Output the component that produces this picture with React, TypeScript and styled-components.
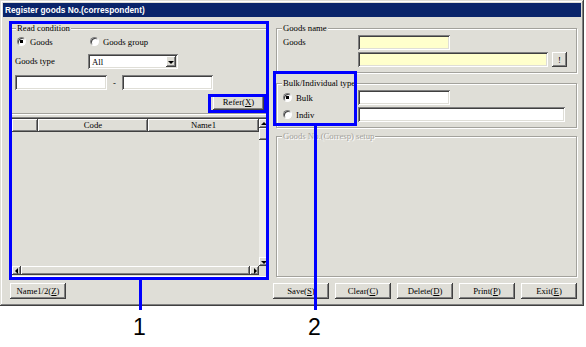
import styled, { createGlobalStyle } from 'styled-components';

const GlobalStyle = createGlobalStyle`
  html, body {
    margin: 0;
    padding: 0;
    background: #ffffff;
  }
  body {
    font-family: "Liberation Serif", serif;
  }
`;

const FACE = '#dfded7';

export default function App() {
  return (
    <Page>
      <GlobalStyle />
      <Window>
        <TitleBar>Register goods No.(correspondent)</TitleBar>
        <Body>
          <Column>
            <Group $pb={3}>
              <Legend>Read condition</Legend>
              <ReadGrid $mt={-1}>
                <RadioLabel>
                  <Radio $checked />
                  Goods
                </RadioLabel>
                <RadioLabel>
                  <Radio />
                  Goods group
                </RadioLabel>
              </ReadGrid>
              <ReadGrid $mt={5}>
                <Label>Goods type</Label>
                <Select>
                  <span>All</span>
                  <DropButton>
                    <Arrow $dir="down" />
                  </DropButton>
                </Select>
              </ReadGrid>
              <RangeRow>
                <Field $w={92} />
                <Dash>-</Dash>
                <Field $w={91} />
              </RangeRow>
              <ReferRow>
                <Button $w={51}>
                  Refer(<u>X</u>)
                </Button>
              </ReferRow>
            </Group>

            <Table>
              <TableMain>
                <HeaderRow>
                  <HeaderCell $w={26} />
                  <HeaderCell $w={110}>Code</HeaderCell>
                  <HeaderCell $w={111}>Name1</HeaderCell>
                </HeaderRow>
              </TableMain>
              <VScroll>
                <ScrollButton>
                  <Arrow $dir="up" />
                </ScrollButton>
                <Thumb $h={12} />
                <Track />
                <ScrollButton>
                  <Arrow $dir="down" />
                </ScrollButton>
              </VScroll>
              <HScroll>
                <ScrollButton>
                  <Arrow $dir="left" />
                </ScrollButton>
                <Thumb $grow />
                <ScrollButton>
                  <Arrow $dir="right" />
                </ScrollButton>
              </HScroll>
              <Corner />
            </Table>
          </Column>

          <Column>
            <Group>
              <Legend>Goods name</Legend>
              <FormGrid>
                <Label>Goods</Label>
                <Field $w={92} $bg="#ffffcc" />
                <span />
                <FieldRow>
                  <Field $w={190} $bg="#ffffcc" />
                  <SmallButton>!</SmallButton>
                </FieldRow>
              </FormGrid>
            </Group>

            <Group $mt={5}>
              <Legend>Bulk/Individual type</Legend>
              <FormGrid>
                <RadioLabel $pl={0}>
                  <Radio $checked />
                  Bulk
                </RadioLabel>
                <Field $w={92} />
                <RadioLabel $pl={0}>
                  <Radio />
                  Indiv
                </RadioLabel>
                <Field $w={207} />
              </FormGrid>
            </Group>

            <Group $mt={3} $grow>
              <Legend $disabled>Goods No.(Corresp) setup</Legend>
            </Group>
          </Column>
        </Body>

        <Footer>
          <Button $w={56}>
            Name1/2(<u>Z</u>)
          </Button>
          <ButtonGroup>
            <Button $w={56}>
              Save(<u>S</u>)
            </Button>
            <Button $w={56}>
              Clear(<u>C</u>)
            </Button>
            <Button $w={56}>
              Delete(<u>D</u>)
            </Button>
            <Button $w={56}>
              Print(<u>P</u>)
            </Button>
            <Button $w={56}>
              Exit(<u>E</u>)
            </Button>
          </ButtonGroup>
        </Footer>
      </Window>

      {/* annotation callouts drawn over the screenshot */}
      <Callout $x={9} $y={21} $w={260} $h={259} />
      <Callout $x={208} $y={94} $w={59} $h={19} />
      <Callout $x={273} $y={71} $w={84} $h={55} />
      <Leader $x={139} $y={280} $h={30} />
      <Leader $x={314} $y={126} $h={184} />
      <Marker $x={133}>1</Marker>
      <Marker $x={308}>2</Marker>
    </Page>
  );
}

const Page = styled.div`
  position: relative;
  width: 586px;
  height: 347px;
  overflow: hidden;
`;

const Window = styled.div`
  width: 584px;
  height: 306px;
  box-sizing: border-box;
  padding: 3px;
  background: ${FACE};
  box-shadow: inset -1px -1px #404040, inset 1px 1px ${FACE},
    inset -2px -2px #808080, inset 2px 2px #ffffff;
  display: flex;
  flex-direction: column;
`;

const TitleBar = styled.div`
  height: 14px;
  background: #0a246a;
  color: #ffffff;
  font-family: "Liberation Sans", Arial, sans-serif;
  font-weight: bold;
  font-size: 8.3px;
  line-height: 14px;
  padding-left: 2px;
  white-space: nowrap;
`;

const Body = styled.div`
  display: grid;
  grid-template-columns: 257px 301px;
  column-gap: 9px;
  height: 254px;
  padding: 6px 0 0 7px;
`;

const Column = styled.div`
  display: flex;
  flex-direction: column;
  min-height: 0;
`;

const Group = styled.fieldset<{ $mt?: number; $pb?: number; $grow?: boolean }>`
  margin: ${(p) => p.$mt ?? 0}px 0 0 0;
  padding: 1px 5px ${(p) => p.$pb ?? 5}px 6px;
  border: 1px solid #a3a29c;
  box-shadow: inset 1px 1px #ffffff, 1px 1px #ffffff;
  min-width: 0;
  ${(p) => (p.$grow ? 'flex: 1;' : '')}
`;

const Legend = styled.legend<{ $disabled?: boolean }>`
  padding: 0 1px;
  margin-left: -1px;
  background: ${FACE};
  font-size: 8.7px;
  line-height: 11px;
  color: ${(p) => (p.$disabled ? '#a3a29c' : '#000000')};
  ${(p) => (p.$disabled ? 'text-shadow: 1px 1px #ffffff;' : '')}
`;

const Label = styled.span`
  font-size: 8.7px;
  line-height: 15px;
  color: #000000;
  white-space: nowrap;
`;

const ReadGrid = styled.div<{ $mt?: number }>`
  display: grid;
  grid-template-columns: 73px auto;
  align-items: center;
  margin-top: ${(p) => p.$mt ?? 0}px;
  margin-left: -2px;
`;

const RadioLabel = styled.label<{ $pl?: number }>`
  display: flex;
  align-items: center;
  gap: 4px;
  padding-left: ${(p) => p.$pl ?? 2}px;
  height: 15px;
  font-size: 8.7px;
  white-space: nowrap;
`;

const Radio = styled.span<{ $checked?: boolean }>`
  width: 9px;
  height: 9px;
  box-sizing: border-box;
  border-radius: 50%;
  border: 1px solid;
  border-color: #808080 #ffffff #ffffff #808080;
  background: ${(p) =>
    p.$checked
      ? 'radial-gradient(circle, #000000 0 1.6px, #ffffff 2px)'
      : '#ffffff'};
  box-shadow: inset 1px 1px #404040;
  flex: none;
`;

const sunken = `
  box-sizing: border-box;
  box-shadow: inset 1px 1px #808080, inset -1px -1px #ffffff,
    inset 2px 2px #404040, inset -2px -2px ${FACE};
`;

const raised = `
  box-sizing: border-box;
  background: ${FACE};
  box-shadow: inset -1px -1px #404040, inset 1px 1px #ffffff,
    inset -2px -2px #808080;
`;

const Field = styled.div<{ $w: number; $bg?: string }>`
  ${sunken}
  width: ${(p) => p.$w}px;
  height: 15px;
  background: ${(p) => p.$bg ?? '#ffffff'};
`;

const Select = styled.div`
  ${sunken}
  width: 90px;
  height: 15px;
  background: #ffffff;
  display: flex;
  align-items: center;
  justify-content: space-between;
  padding: 2px 2px 2px 4px;
  font-size: 8.7px;
`;

const DropButton = styled.div`
  ${raised}
  width: 10px;
  height: 11px;
  display: flex;
  align-items: center;
  justify-content: center;
`;

const Arrow = styled.span<{ $dir: 'up' | 'down' | 'left' | 'right' }>`
  width: 0;
  height: 0;
  border: 3px solid transparent;
  ${(p) =>
    p.$dir === 'down'
      ? 'border-top: 3px solid #000; border-bottom: 0; margin-top: 1px;'
      : p.$dir === 'up'
      ? 'border-bottom: 3px solid #000; border-top: 0;'
      : p.$dir === 'left'
      ? 'border-right: 3px solid #000; border-left: 0;'
      : 'border-left: 3px solid #000; border-right: 0; margin-left: 1px;'}
`;

const RangeRow = styled.div`
  display: flex;
  align-items: center;
  margin: 6px 0 0 -2px;
`;

const Dash = styled.span`
  width: 15px;
  text-align: center;
  font-size: 8.7px;
`;

const ReferRow = styled.div`
  display: flex;
  justify-content: flex-end;
  margin: 4px -3px 0 0;
`;

const Button = styled.div<{ $w: number }>`
  ${raised}
  width: ${(p) => p.$w}px;
  height: 16px;
  display: flex;
  align-items: center;
  justify-content: center;
  font-size: 8.7px;
  white-space: nowrap;
  u {
    text-decoration-thickness: 1px;
  }
`;

const SmallButton = styled.div`
  ${raised}
  width: 15px;
  height: 15px;
  display: flex;
  align-items: center;
  justify-content: center;
  font-size: 8.7px;
`;

const FormGrid = styled.div`
  display: grid;
  grid-template-columns: 75px auto;
  row-gap: 2px;
  align-items: center;
`;

const FieldRow = styled.div`
  display: flex;
  gap: 4px;
`;

const Table = styled.div`
  ${sunken}
  margin-top: 3px;
  flex: 1;
  padding: 2px;
  display: grid;
  grid-template-columns: 1fr 9px;
  grid-template-rows: 1fr 9px;
`;

const TableMain = styled.div`
  background: ${FACE};
`;

const HeaderRow = styled.div`
  display: flex;
  height: 13px;
`;

const HeaderCell = styled.div<{ $w: number }>`
  ${raised}
  width: ${(p) => p.$w}px;
  font-size: 8.7px;
  line-height: 13px;
  text-align: center;
`;

const VScroll = styled.div`
  display: flex;
  flex-direction: column;
  background: #eeede8;
`;

const HScroll = styled.div`
  display: flex;
  background: #eeede8;
`;

const ScrollButton = styled.div`
  ${raised}
  width: 9px;
  height: 9px;
  display: flex;
  align-items: center;
  justify-content: center;
  flex: none;
`;

const Thumb = styled.div<{ $h?: number; $grow?: boolean }>`
  ${raised}
  ${(p) => (p.$grow ? 'flex: 1;' : `height: ${p.$h}px;`)}
`;

const Track = styled.div`
  flex: 1;
`;

const Corner = styled.div`
  background: ${FACE};
`;

const Footer = styled.div`
  display: flex;
  justify-content: space-between;
  padding: 6px 4px 0 7px;
`;

const ButtonGroup = styled.div`
  display: flex;
  gap: 6px;
`;

const Callout = styled.div<{ $x: number; $y: number; $w: number; $h: number }>`
  position: absolute;
  left: ${(p) => p.$x}px;
  top: ${(p) => p.$y}px;
  width: ${(p) => p.$w}px;
  height: ${(p) => p.$h}px;
  box-sizing: border-box;
  border: 3px solid #0000ff;
`;

const Leader = styled.div<{ $x: number; $y: number; $h: number }>`
  position: absolute;
  left: ${(p) => p.$x}px;
  top: ${(p) => p.$y}px;
  width: 3px;
  height: ${(p) => p.$h}px;
  background: #0000ff;
`;

const Marker = styled.div<{ $x: number }>`
  position: absolute;
  left: ${(p) => p.$x}px;
  top: 314px;
  font-family: "Liberation Sans", Arial, sans-serif;
  font-size: 23px;
  line-height: 26px;
  color: #000000;
`;
